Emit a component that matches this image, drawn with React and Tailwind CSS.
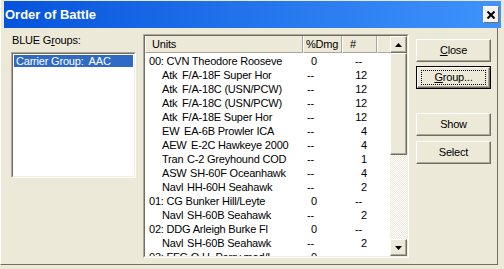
import React from 'react';

const units = [
  { name: '00: CVN Theodore Rooseve', dmg: '0', n: '--', top: true },
  { type: 'Atk', tw: 'w-[20px]', name: 'F/A-18F Super Hor', dmg: '--', n: '12' },
  { type: 'Atk', tw: 'w-[20px]', name: 'F/A-18C (USN/PCW)', dmg: '--', n: '12' },
  { type: 'Atk', tw: 'w-[20px]', name: 'F/A-18C (USN/PCW)', dmg: '--', n: '12' },
  { type: 'Atk', tw: 'w-[20px]', name: 'F/A-18E Super Hor', dmg: '--', n: '12' },
  { type: 'EW', tw: 'w-[22px]', name: 'EA-6B Prowler ICA', dmg: '--', n: '4' },
  { type: 'AEW', tw: 'w-[29px]', name: 'E-2C Hawkeye 2000', dmg: '--', n: '4' },
  { type: 'Tran', tw: 'w-[25px]', name: 'C-2 Greyhound COD', dmg: '--', n: '1' },
  { type: 'ASW', tw: 'w-[28px]', name: 'SH-60F Oceanhawk', dmg: '--', n: '4' },
  { type: 'Navl', tw: 'w-[25px]', name: 'HH-60H Seahawk', dmg: '--', n: '2' },
  { name: '01: CG Bunker Hill/Leyte', dmg: '0', n: '--', top: true },
  { type: 'Navl', tw: 'w-[25px]', name: 'SH-60B Seahawk', dmg: '--', n: '2' },
  { name: '02: DDG Arleigh Burke Fl', dmg: '0', n: '--', top: true },
  { type: 'Navl', tw: 'w-[25px]', name: 'SH-60B Seahawk', dmg: '--', n: '2' },
  { name: '03: FFG O.H. Perry mod/I', dmg: '0', n: '--', top: true },
];

function Raised({ className = '', children }) {
  return (
    <div
      className={`border-t border-l border-white border-r border-b border-r-[#716f64] border-b-[#716f64] shadow-[inset_-1px_-1px_#aca899] bg-[#ece9d8] ${className}`}
    >
      {children}
    </div>
  );
}

function Sunken({ className = '', children }) {
  return (
    <div className={`border-t border-l border-[#aca899] border-r border-b border-r-white border-b-white ${className}`}>
      <div className="h-full border-t border-l border-[#716f64] border-r border-b border-r-[#f1efe2] border-b-[#f1efe2] bg-white overflow-hidden">
        {children}
      </div>
    </div>
  );
}

function Button({ children, isDefault }) {
  if (isDefault) {
    return (
      <div className="w-[75px] h-[23px] border border-black">
        <Raised className="h-full flex items-center justify-center">
          <div className="w-[65px] h-[15px] border border-dotted border-black flex items-center justify-center">
            {children}
          </div>
        </Raised>
      </div>
    );
  }
  return (
    <Raised className="w-[75px] h-[23px] flex items-center justify-center">{children}</Raised>
  );
}

function Arrow({ up }) {
  return (
    <svg width="7" height="4" viewBox="0 0 7 4">
      {up ? <path d="M3.5 0 L7 4 L0 4 Z" fill="#000" /> : <path d="M0 0 L7 0 L3.5 4 Z" fill="#000" />}
    </svg>
  );
}

export default function App() {
  return (
    <div className="w-[504px] h-[269px] bg-[#ece9d8] overflow-hidden text-black text-[11px] leading-[13px] tracking-[-0.2px] font-['Liberation_Sans',Arial,sans-serif]">
      {/* title bar */}
      <div className="h-[28px] pl-[3px] pr-[3px] pt-[1px] border-l border-white">
        <div className="h-[27px] flex items-center justify-between bg-linear-to-r from-[#0553dc] to-[#3f93fb] pl-[1px] pr-[2px]">
          <span className="text-white font-bold text-[13px] tracking-normal">Order of Battle</span>
          <div className="w-[16px] h-[17px] flex items-center justify-center bg-[#f4f3ee] border-t border-l border-white border-r border-b border-r-[#716f64] border-b-[#716f64]">
            <svg width="8" height="8" viewBox="0 0 8 8">
              <path d="M0.5 0.5 L7.5 7.5 M7.5 0.5 L0.5 7.5" stroke="#000" strokeWidth="2" />
            </svg>
          </div>
        </div>
      </div>

      {/* client */}
      <div className="w-[498px] h-[237px] flex border-r border-b border-r-[#716f64] border-b-[#716f64] border-l border-l-white">
        {/* groups */}
        <div className="pl-[10px] pt-[6px]">
          <div className="pl-[1px]">
            BLUE G<span className="underline">r</span>oups:
          </div>
          <Sunken className="mt-[5px] w-[125px] h-[126px]">
            <div className="mt-[1px] mx-[1px] h-[12px] bg-[#316ac5] text-white pl-[2px] leading-[12px] whitespace-pre">
              Carrier Group:  AAC
            </div>
          </Sunken>
        </div>

        {/* units list */}
        <div className="ml-[7px] pt-[6px]">
          <Sunken className="w-[266px] h-[224px]">
            <div className="flex h-full">
              <div className="w-[245px] flex flex-col">
                <div className="h-[17px] flex shrink-0">
                  <Raised className="w-[158px] pl-[6px] flex items-center border-t-0 border-r-[#aca899] border-b-[#aca899] shadow-none">Units</Raised>
                  <Raised className="w-[39px] pl-[2px] flex items-center border-t-0 border-r-[#aca899] border-b-[#aca899] shadow-none">%Dmg</Raised>
                  <Raised className="w-[35px] pl-[7px] flex items-center border-t-0 border-r-[#aca899] border-b-[#aca899] shadow-none">#</Raised>
                  <Raised className="flex-1 border-t-0 border-r-0 border-b-[#aca899] shadow-none" />
                </div>
                <div className="pt-[1px]">
                  {units.map((u, i) => (
                    <div key={i} className="h-[14px] flex items-center whitespace-pre">
                      <div className="w-[158px] flex">
                        {u.top ? (
                          <span className="pl-[4px]">{u.name}</span>
                        ) : (
                          <>
                            <span className={`pl-[17px] shrink-0 ${u.tw} box-content`}>{u.type}</span>
                            <span>{u.name}</span>
                          </>
                        )}
                      </div>
                      <div className={`w-[39px] ${u.top ? 'pl-[8px]' : 'pl-[4px]'}`}>{u.dmg}</div>
                      <div className={`w-[35px] ${u.top ? 'pl-[13px]' : 'text-right pr-[10px]'}`}>{u.n}</div>
                    </div>
                  ))}
                </div>
              </div>

              {/* scrollbar */}
              <div className="w-[17px] flex flex-col">
                <Raised className="h-[17px] shrink-0 flex items-center justify-center">
                  <Arrow up />
                </Raised>
                <Raised className="h-[102px] shrink-0" />
                <div className="flex-1 bg-[repeating-conic-gradient(#ffffff_0_25%,#ece9d8_0_50%)] bg-[length:2px_2px]" />
                <Raised className="h-[17px] shrink-0 flex items-center justify-center">
                  <Arrow />
                </Raised>
              </div>
            </div>
          </Sunken>
        </div>

        {/* buttons */}
        <div className="ml-[7px] pt-[11px] flex flex-col">
          <Button>
            <span><span className="underline">C</span>lose</span>
          </Button>
          <div className="mt-[4px]">
            <Button isDefault>
              <span><span className="underline">G</span>roup...</span>
            </Button>
          </div>
          <div className="mt-[24px]">
            <Button>Show</Button>
          </div>
          <div className="mt-[5px]">
            <Button>Select</Button>
          </div>
        </div>
      </div>
    </div>
  );
}
